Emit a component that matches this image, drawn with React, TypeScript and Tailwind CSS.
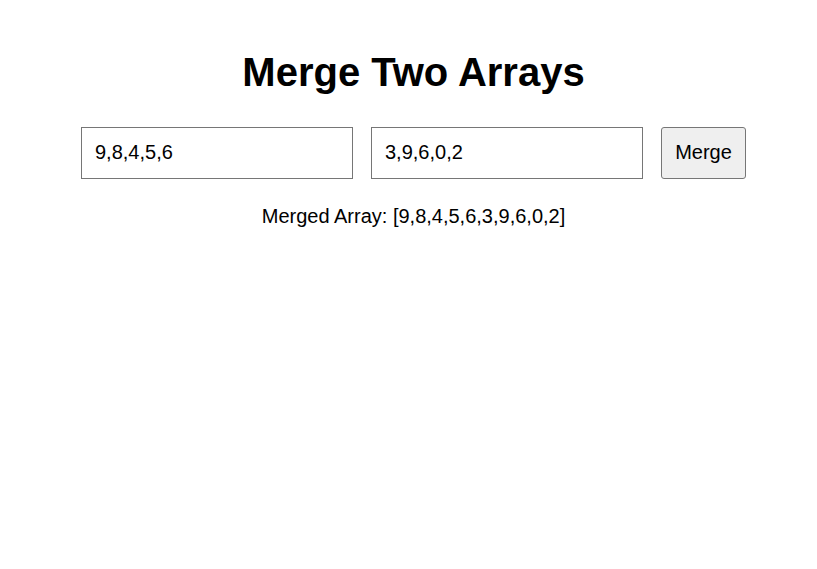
import { useState } from 'react';

export default function App() {
  const [first, setFirst] = useState('9,8,4,5,6');
  const [second, setSecond] = useState('3,9,6,0,2');
  const [merged, setMerged] = useState('9,8,4,5,6,3,9,6,0,2');

  function handleMerge() {
    const a = first.split(',').map((s) => s.trim()).filter(Boolean);
    const b = second.split(',').map((s) => s.trim()).filter(Boolean);
    setMerged([...a, ...b].join(','));
  }

  return (
    <div className="min-h-screen bg-white pl-[10px] pt-[49px] text-black [font-family:'Liberation_Sans',Arial,sans-serif]">
      <h1 className="text-center text-[40px] font-bold leading-[46px]">Merge Two Arrays</h1>

      <div className="mt-[32px] flex justify-center gap-[18px]">
        <input
          value={first}
          onChange={(e) => setFirst(e.target.value)}
          className="h-[52px] w-[272px] border border-[#767676] bg-white px-[13px] pb-[2px] text-[20px] outline-none"
        />
        <input
          value={second}
          onChange={(e) => setSecond(e.target.value)}
          className="h-[52px] w-[272px] border border-[#767676] bg-white px-[13px] pb-[2px] text-[20px] outline-none"
        />
        <button
          onClick={handleMerge}
          className="h-[52px] w-[85px] rounded-[3px] border border-[#767676] bg-[#efefef] pb-[2px] text-[20px]"
        >
          Merge
        </button>
      </div>

      <p className="mt-[26px] text-center text-[20px] leading-[23px]">Merged Array: [{merged}]</p>
    </div>
  );
}
